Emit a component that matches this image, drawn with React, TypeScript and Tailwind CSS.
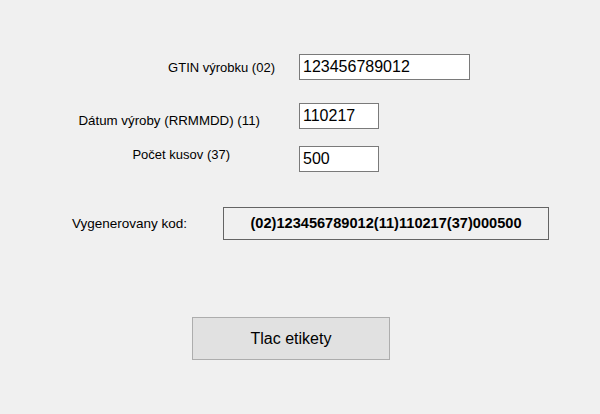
export default function App() {
  return (
    <div className="w-[600px] h-[414px] bg-[#f0f0f0] pt-[54px] font-['Liberation_Sans',Arial,sans-serif] text-black">
      {/* GTIN */}
      <div className="flex h-[26px]">
        <div className="w-[299px] flex items-center justify-end pr-[24px] pt-[2px] text-[13px]">GTIN výrobku (02)</div>
        <div className="w-[171px] h-[26px] border border-[#7a7a7a] bg-white flex items-center pl-[3px] text-[16px] leading-none">
          123456789012
        </div>
      </div>

      {/* Datum */}
      <div className="flex h-[26px] mt-[23px]">
        <div className="w-[299px] flex justify-end pr-[39px] pt-[11px] text-[13.3px] leading-none">Dátum výroby (RRMMDD) (11)</div>
        <div className="w-[80px] h-[26px] border border-[#7a7a7a] bg-white flex items-center pl-[3px] text-[16px] leading-none">
          110217
        </div>
      </div>

      {/* Pocet */}
      <div className="flex h-[26px] mt-[17px]">
        <div className="w-[299px] flex justify-end pr-[69px] pt-[2px] text-[13px] leading-none">Počet kusov (37)</div>
        <div className="w-[80px] h-[26px] border border-[#7a7a7a] bg-white flex items-center pl-[3px] text-[16px] leading-none">
          500
        </div>
      </div>

      {/* Vygenerovany kod */}
      <div className="flex items-center h-[33px] mt-[35px]">
        <div className="w-[223px] pl-[72px] text-[13.5px] leading-none">Vygenerovany kod:</div>
        <div className="w-[326px] h-[33px] border border-[#646464] flex items-center justify-center font-bold text-[14.6px] leading-none">
          (02)123456789012(11)110217(37)000500
        </div>
      </div>

      <div className="pl-[192px] mt-[77px]">
        <button className="w-[198px] h-[43px] bg-[#e1e1e1] border border-[#adadad] text-[16px] leading-none flex items-center justify-center">
          Tlac etikety
        </button>
      </div>
    </div>
  );
}
